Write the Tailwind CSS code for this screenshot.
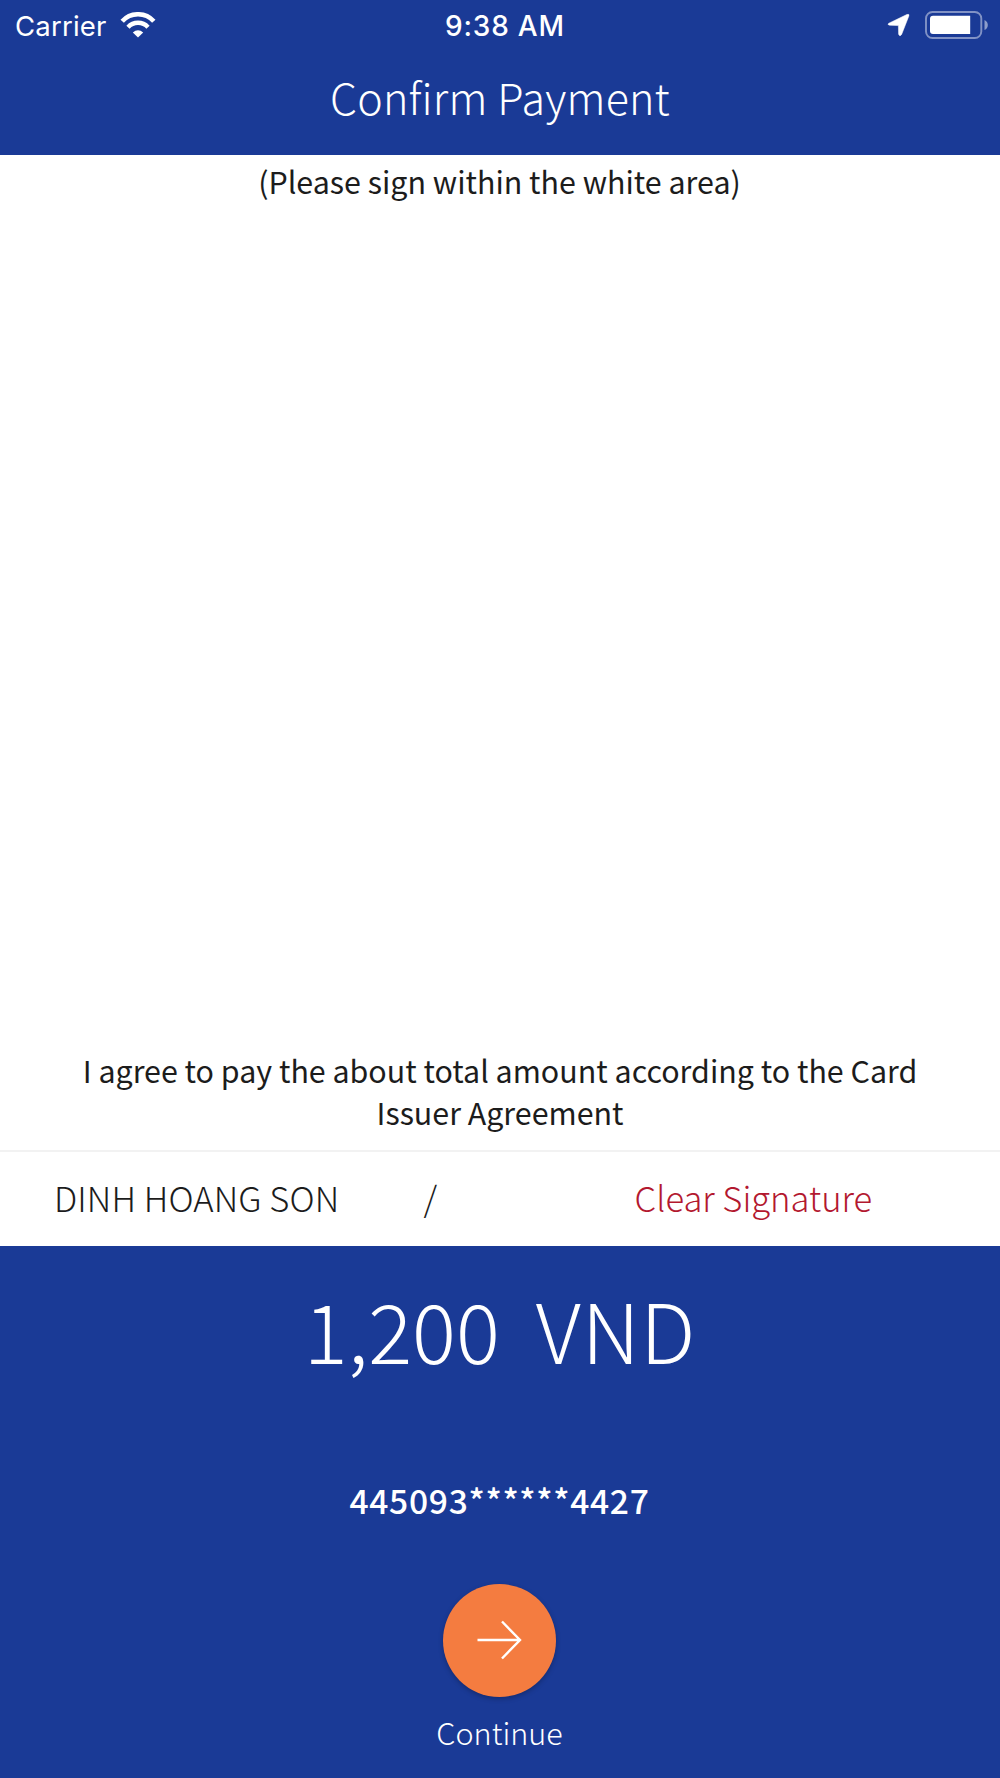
<!DOCTYPE html>
<html lang="en">
<head>
<meta charset="utf-8">
<title>Confirm Payment</title>
<script src="https://cdn.jsdelivr.net/npm/@tailwindcss/browser@4"></script>
</head>
<body class="bg-white">
<main class="flex h-[1778px] w-[1000px] flex-col overflow-hidden bg-white font-['Noto_Sans_CJK_SC',sans-serif] text-[#1c1c1c]">
  <header class="h-[154.5px] shrink-0 bg-[#1a3a96] text-white">
    <div class="grid h-[50px] grid-cols-3 items-center pr-[12px] pl-[15px] font-['Inter',sans-serif] leading-[50px]">
      <div class="flex items-center gap-[13px]">
        <span class="pt-[1px] text-[27.5px] leading-[48px] tracking-[0.2px]">Carrier</span>
        <svg class="h-[26px] w-[36px]" viewBox="0 0 36 26" fill="none" stroke="#fff">
          <path d="M2.2 9.2 A21.5 21.5 0 0 1 33.8 9.2" stroke-width="4.6"/>
          <path d="M8 15.2 A13.6 13.6 0 0 1 28 15.2" stroke-width="4.4"/>
          <path d="M18 25.600 L12.800 20.400 Q18 16.200 23.200 20.400 Z" fill="#fff" stroke="none"/>
        </svg>
      </div>
      <span class="pt-[1px] pl-[7px] text-center text-[28px] leading-[48px] font-medium tracking-[0.8px]">9:38 AM</span>
      <div class="flex items-center justify-end gap-[15px]">
        <svg class="h-[24px] w-[23px]" viewBox="0 0 22 24" preserveAspectRatio="none"><path d="M1.8 10.2 L19 1.5 Q21.6.6 20.9 3 L14 21.400 Q12.200 24.200 11.100 21.200 L10.900 12.600 L2.400 12.200 Q-.2 11.600 1.800 10.200Z" fill="#fff" stroke="#fff" stroke-width=".5"/></svg>
        <svg class="h-[28px] w-[63px]" viewBox="0 0 63 28">
          <rect x="1" y="1" width="55.300" height="26" rx="6.500" fill="none" stroke="#fff" stroke-opacity=".45" stroke-width="1.900"/>
          <path d="M8 4.800 H45.200 V23 H8 Q5 23 5 20 V7.800 Q5 4.800 8 4.800Z" fill="#fff"/>
          <path d="M59.500 9 Q62.800 10.500 62.800 14 Q62.800 17.500 59.500 19Z" fill="#fff" fill-opacity=".5"/>
        </svg>
      </div>
    </div>
    <h1 class="text-center text-[43px] leading-[93px] font-light tracking-[0.2px]">Confirm Payment</h1>
  </header>

  <section class="flex h-[997.500px] shrink-0 flex-col justify-between border-b-2 border-[#f2f2f2] pb-[17px] text-center text-[30.4px]">
    <p class="pr-[1px] leading-[53px]">(Please sign within the white area)</p>
    <p class="leading-[42px]">I agree to pay the about total amount according to the Card<br>Issuer Agreement</p>
  </section>

  <section class="flex h-[94.400px] shrink-0 pl-[54px] text-[34.6px] leading-[90px] font-light whitespace-nowrap">
    <span class="w-[369.500px] tracking-[0.1px]">DINH HOANG SON</span>
    <span class="w-[211px]">/</span>
    <span class="text-[#b3182f]">Clear Signature</span>
  </section>

  <footer class="flex grow flex-col items-center bg-[#1a3a96] pr-[2px] text-white">
    <div class="flex gap-[36px] pl-[2px] text-[82px] leading-[166px] font-light"><span>1,200</span><span class="tracking-[0.7px]">VND</span></div>
    <p class="mt-[58px] pl-[1px] text-[33.6px] leading-[60px] font-medium tracking-[0.7px]">445093******4427</p>
    <button class="mt-[53.600px] flex size-[113px] items-center justify-center rounded-full bg-[#f47c40] shadow-[0_2px_5px_rgba(0,0,0,0.25)]">
      <svg class="h-[40px] w-[46px]" viewBox="0 0 46 40" fill="none" stroke="#fff" stroke-width="2.4"><path d="M1.500 20 H44 M26 1.500 L44 20 L26 38.500"/></svg>
    </button>
    <p class="mt-[13px] pl-[1px] text-[30.5px] leading-[45px] font-light">Continue</p>
  </footer>
</main>
</body>
</html>
